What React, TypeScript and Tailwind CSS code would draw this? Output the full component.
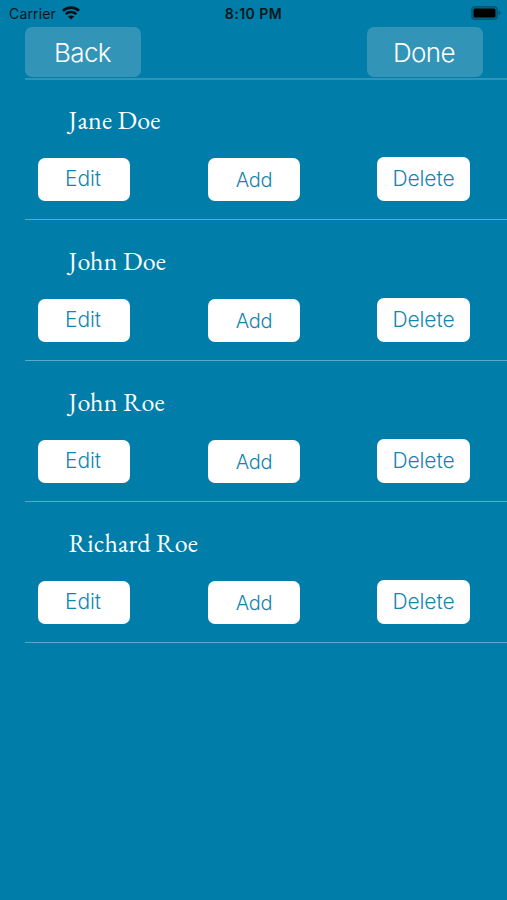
const PEOPLE = ["Jane Doe", "John Doe", "John Roe", "Richard Roe"];

function WifiIcon() {
  return (
    <svg className="mt-[6px] ml-[5.5px] h-[14px] w-[20px]" viewBox="0 0 20 14" fill="none">
      <path d="M1.9 4.7C6.5 .5 13.5 .5 18.1 4.7" stroke="#001018" strokeWidth="2.7" />
      <path d="M4.7 8.1C7.7 5.4 12.3 5.4 15.3 8.1" stroke="#001018" strokeWidth="2.5" />
      <path d="M6.9 10.6C8.7 9 11.3 9 13.1 10.6L10 13.6Z" fill="#001018" />
    </svg>
  );
}

function BatteryIcon() {
  return (
    <svg className="mt-[6px] h-[15px] w-[31px]" viewBox="0 0 31 15">
      <rect x=".8" y=".7" width="25.4" height="12.6" rx="3.4" fill="#00668a" stroke="#00546f" strokeWidth="1.2" />
      <rect x="2.6" y="2.6" width="21.8" height="9" rx="1.6" fill="#000" />
      <path d="M27.6 4.8c2.4 .6 2.4 3.8 0 4.4Z" fill="#00546f" />
    </svg>
  );
}

function StatusBar() {
  return (
    <div className="grid h-[27px] grid-cols-3 text-[#001720]">
      <div className="flex">
        <span className="mt-[4px] ml-[9px] text-[14px] leading-[20px] tracking-[0.15px]">Carrier</span>
        <WifiIcon />
      </div>
      <span className="mt-[4px] text-center text-[14px] leading-[20px] font-semibold tracking-[0.5px]">
        8:10 PM
      </span>
      <div className="flex justify-end pr-[5px]">
        <BatteryIcon />
      </div>
    </div>
  );
}

function NavButton({ label }: { label: string }) {
  return (
    <button className="h-[50px] w-[116px] rounded-[7px] bg-[#3295b8] pt-[2px] pr-[1px] text-[26px] leading-[48px] font-[350] tracking-[-0.6px] text-white">
      {label}
    </button>
  );
}

function PersonRow({ name }: { name: string }) {
  return (
    <li className="h-[141px] border-b border-[#58abc6] pt-[23px]">
      <h2 className="ml-[43.5px] h-[36px] font-['EB_Garamond','Liberation_Serif',serif] text-[26px] leading-[36px] tracking-[0.15px] text-white">
        {name}
      </h2>
      <div className="mt-[19px] flex items-start text-[#1685ae]">
        <button className="mt-[0.5px] ml-[12.5px] h-[43px] w-[92px] rounded-[7px] bg-white pr-[1px] text-[21px] font-[350] tracking-[-0.1px]">
          Edit
        </button>
        <button className="mt-[0.5px] ml-[78.5px] h-[43px] w-[92px] rounded-[7px] bg-white pt-[2px] text-[20px] font-[350] tracking-[-0.3px]">
          Add
        </button>
        <button className="ml-[77px] h-[43.5px] w-[93px] rounded-[7px] bg-white text-[21px] font-[350] tracking-[-0.1px]">
          Delete
        </button>
      </div>
    </li>
  );
}

export default function App() {
  return (
    <div className="h-[900px] w-[507px] overflow-hidden bg-[#007da9] font-['Inter',sans-serif]">
      <StatusBar />
      <div className="ml-[25px]">
        <div className="flex h-[53px] justify-between border-b-2 border-[#2f95b8] pr-[24.5px]">
          <NavButton label="Back" />
          <NavButton label="Done" />
        </div>
        <ul className="-mt-px">
          {PEOPLE.map((name) => (
            <PersonRow key={name} name={name} />
          ))}
        </ul>
      </div>
    </div>
  );
}
